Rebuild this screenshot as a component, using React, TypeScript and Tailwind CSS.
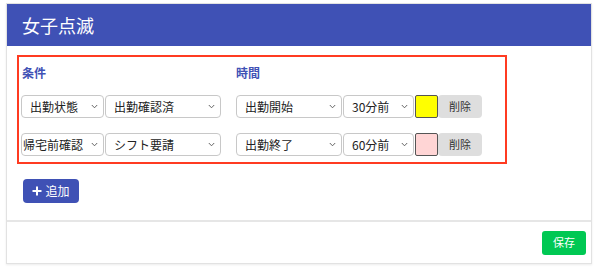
import React from "react";

const Chevron = () => (
  <svg width="7" height="5" viewBox="0 0 7 5" className="shrink-0">
    <path d="M0.8 1 L3.5 3.8 L6.2 1" fill="none" stroke="#555" strokeWidth="0.9" />
  </svg>
);

const Sel = ({ label, w, pl = "pl-[8px]" }: { label: string; w: string; pl?: string }) => (
  <div
    className={`${w} ${pl} h-[23px] flex items-center justify-between border border-[#c8c8c8] rounded-[4px] bg-white pr-[5px] text-[12px] text-[#222]`}
  >
    <span className="whitespace-nowrap">{label}</span>
    <Chevron />
  </div>
);

const Row = ({
  a,
  b,
  c,
  d,
  color,
  aPl,
}: {
  a: string;
  b: string;
  c: string;
  d: string;
  color: string;
  aPl?: string;
}) => (
  <div className="flex h-[23px]">
    <div className="flex gap-[1px]">
      <Sel label={a} w="w-[83px]" pl={aPl} />
      <Sel label={b} w="w-[116px]" />
    </div>
    <div className="flex ml-[15px] gap-[1px]">
      <Sel label={c} w="w-[106px]" />
      <Sel label={d} w="w-[71px]" />
      <div className={`w-[23px] h-[23px] border border-[#555] rounded-[2px] ${color}`} />
      <div className="w-[44px] h-[23px] ml-[-1px] bg-[#dedede] rounded-[4px] flex items-center justify-center text-[11px] text-[#333]">
        削除
      </div>
    </div>
  </div>
);

export default function App() {
  return (
    <div
      className="w-[600px] h-[274px] bg-white pt-[3px] pl-[6px]"
      style={{ fontFamily: '"Noto Sans CJK JP", "Noto Sans", sans-serif' }}
    >
      <div className="w-[586px] h-[261px] border border-[#e2e2e2] shadow-[0_1px_2px_rgba(0,0,0,0.08)] flex flex-col">
        <div className="h-[42px] bg-[#3f51b5] flex items-center pl-[15px] text-white text-[18px] shrink-0">
          女子点滅
        </div>
        <div className="flex-1 pt-[9px] pl-[10px]">
          <div className="w-[490px] h-[109px] border-2 border-[#ff3b21] pl-[2px] pt-[8px]">
            <div className="flex h-[16px] items-center text-[12px] font-bold text-[#3f51b5]">
              <span className="w-[215px] pl-[1px]">条件</span>
              <span>時間</span>
            </div>
            <div className="mt-[14px] flex flex-col gap-[15px]">
              <Row a="出勤状態" b="出勤確認済" c="出勤開始" d="30分前" color="bg-[#ffff00]" />
              <Row a="帰宅前確認" b="シフト要請" c="出勤終了" d="60分前" color="bg-[#ffd5d5]" aPl="pl-[1px]" />
            </div>
          </div>
          <div className="mt-[15px] ml-[6px] w-[56px] h-[24px] bg-[#3f51b5] rounded-[4px] flex items-center justify-center gap-[3px] text-white text-[12px]">
            <svg width="10" height="10" viewBox="0 0 10 10">
              <path d="M5 0.5 V9.5 M0.5 5 H9.5" stroke="white" strokeWidth="2" />
            </svg>
            <span>追加</span>
          </div>
        </div>
        <div className="h-[43px] border-t-2 border-[#e6e6e6] flex items-center justify-end pr-[5px] shrink-0">
          <div className="w-[44px] h-[24px] bg-[#00c853] rounded-[3px] flex items-center justify-center text-white text-[11px]">
            保存
          </div>
        </div>
      </div>
    </div>
  );
}
